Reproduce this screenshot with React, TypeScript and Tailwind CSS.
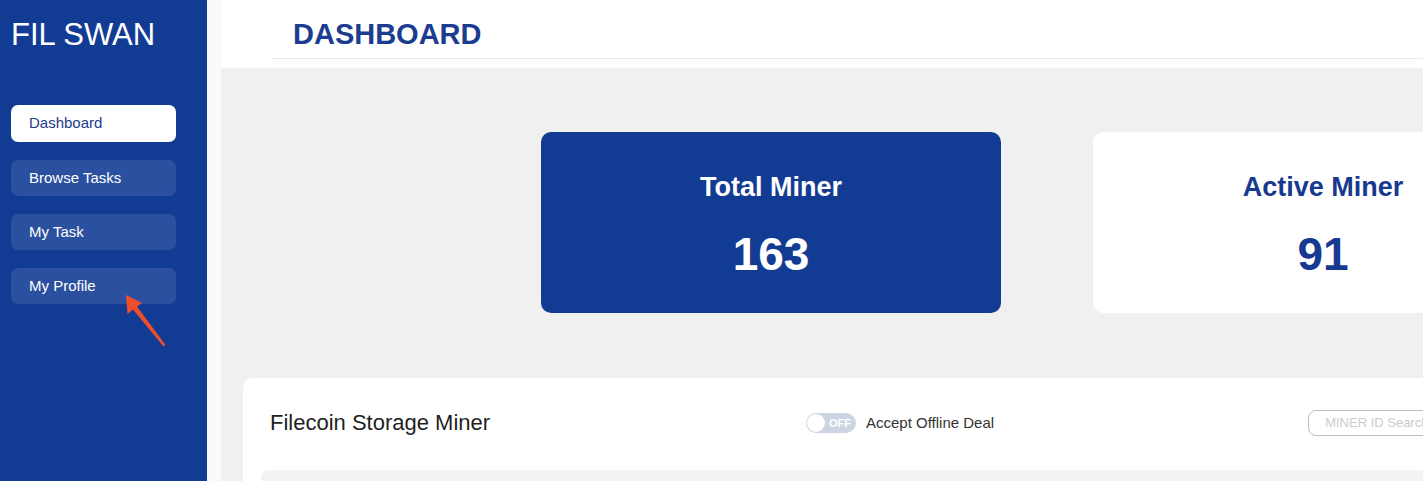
import React from "react";

const navItems = [
  { label: "Dashboard", active: true },
  { label: "Browse Tasks", active: false },
  { label: "My Task", active: false },
  { label: "My Profile", active: false },
];

export default function App() {
  return (
    <div
      className="relative flex h-[481px] w-[1423px] overflow-hidden bg-[#f0f0f0]"
      style={{ fontFamily: '"Liberation Sans", Arial, sans-serif' }}
    >
      {/* Sidebar */}
      <aside className="flex w-[207px] shrink-0 flex-col bg-[#123b94] pl-[11px]">
        <div className="pt-[17px] text-[31px] leading-[36px] text-white">FIL SWAN</div>
        <nav className="mt-[52px] flex flex-col gap-[18px]">
          {navItems.map((item) => (
            <div
              key={item.label}
              className={
                item.active
                  ? "flex h-[37px] w-[165px] items-center rounded-[7px] bg-white pl-[18px] text-[15px] text-[#1d3c8c]"
                  : "flex h-[36px] w-[165px] items-center rounded-[7px] bg-[#2c50a0] pl-[18px] text-[15px] text-white"
              }
            >
              {item.label}
            </div>
          ))}
        </nav>
      </aside>

      {/* Thin strip */}
      <div className="w-[14px] shrink-0 bg-[#fafafa]" />

      {/* Main */}
      <main className="flex min-w-0 flex-1 flex-col">
        <header className="h-[68px] shrink-0 bg-white pl-[51px]">
          <div className="box-border h-[59px] border-b border-[#e8e8e8] pl-[21px] pt-[17px]">
            <h1 className="text-[29px] font-bold leading-[34px] text-[#1a3d8f]">DASHBOARD</h1>
          </div>
        </header>

        <section className="flex flex-col pl-[22px] pt-[64px]">
          <div className="flex gap-[92px] pl-[298px]">
            <div className="flex h-[181px] w-[460px] shrink-0 flex-col items-center rounded-[10px] bg-[#123b94] pt-[39px] text-white">
              <div className="text-[27px] font-bold leading-[32px]">Total Miner</div>
              <div className="mt-[26px] text-[46px] font-bold leading-[50px]">163</div>
            </div>
            <div className="flex h-[181px] w-[460px] shrink-0 flex-col items-center rounded-[10px] bg-white pt-[39px] text-[#17398f]">
              <div className="text-[27px] font-bold leading-[32px]">Active Miner</div>
              <div className="mt-[26px] text-[46px] font-bold leading-[50px]">91</div>
            </div>
          </div>

          <div className="mt-[65px] h-[200px] w-[1300px] shrink-0 rounded-[10px] bg-white">
            <div className="flex h-[28px] items-center pl-[27px] mt-[31px]">
              <div className="w-[536px] shrink-0 text-[22px] leading-[28px] text-[#1f1f1f]">
                Filecoin Storage Miner
              </div>
              <div className="flex shrink-0 items-center gap-[10px]">
                <div className="relative flex h-[20px] w-[50px] items-center rounded-full bg-[#cdd5e4]">
                  <div className="absolute left-[1px] top-[1px] h-[18px] w-[18px] rounded-full bg-white" />
                  <span className="ml-[23px] text-[11px] font-bold leading-none text-white">OFF</span>
                </div>
                <span className="text-[15px] text-[#333333]">Accept Offline Deal</span>
              </div>
              <div className="ml-[314px] flex h-[26px] w-[200px] shrink-0 items-center rounded-[8px] border border-[#bdbdbd] pl-[16px] text-[13px] text-[#cccccc]">
                MINER ID Search
              </div>
            </div>
            <div className="ml-[18px] mt-[33px] h-[100px] rounded-t-[8px] bg-[#f3f3f3]" />
          </div>
        </section>
      </main>

      {/* Red annotation arrow */}
      <svg
        className="pointer-events-none absolute left-0 top-0"
        width="1423"
        height="481"
        viewBox="0 0 1423 481"
      >
        <polygon
          points="126,295 142,303 137,306.5 165.5,345 163.5,346.5 133,309.5 127.5,314"
          fill="#f04e2a"
        />
      </svg>
    </div>
  );
}
